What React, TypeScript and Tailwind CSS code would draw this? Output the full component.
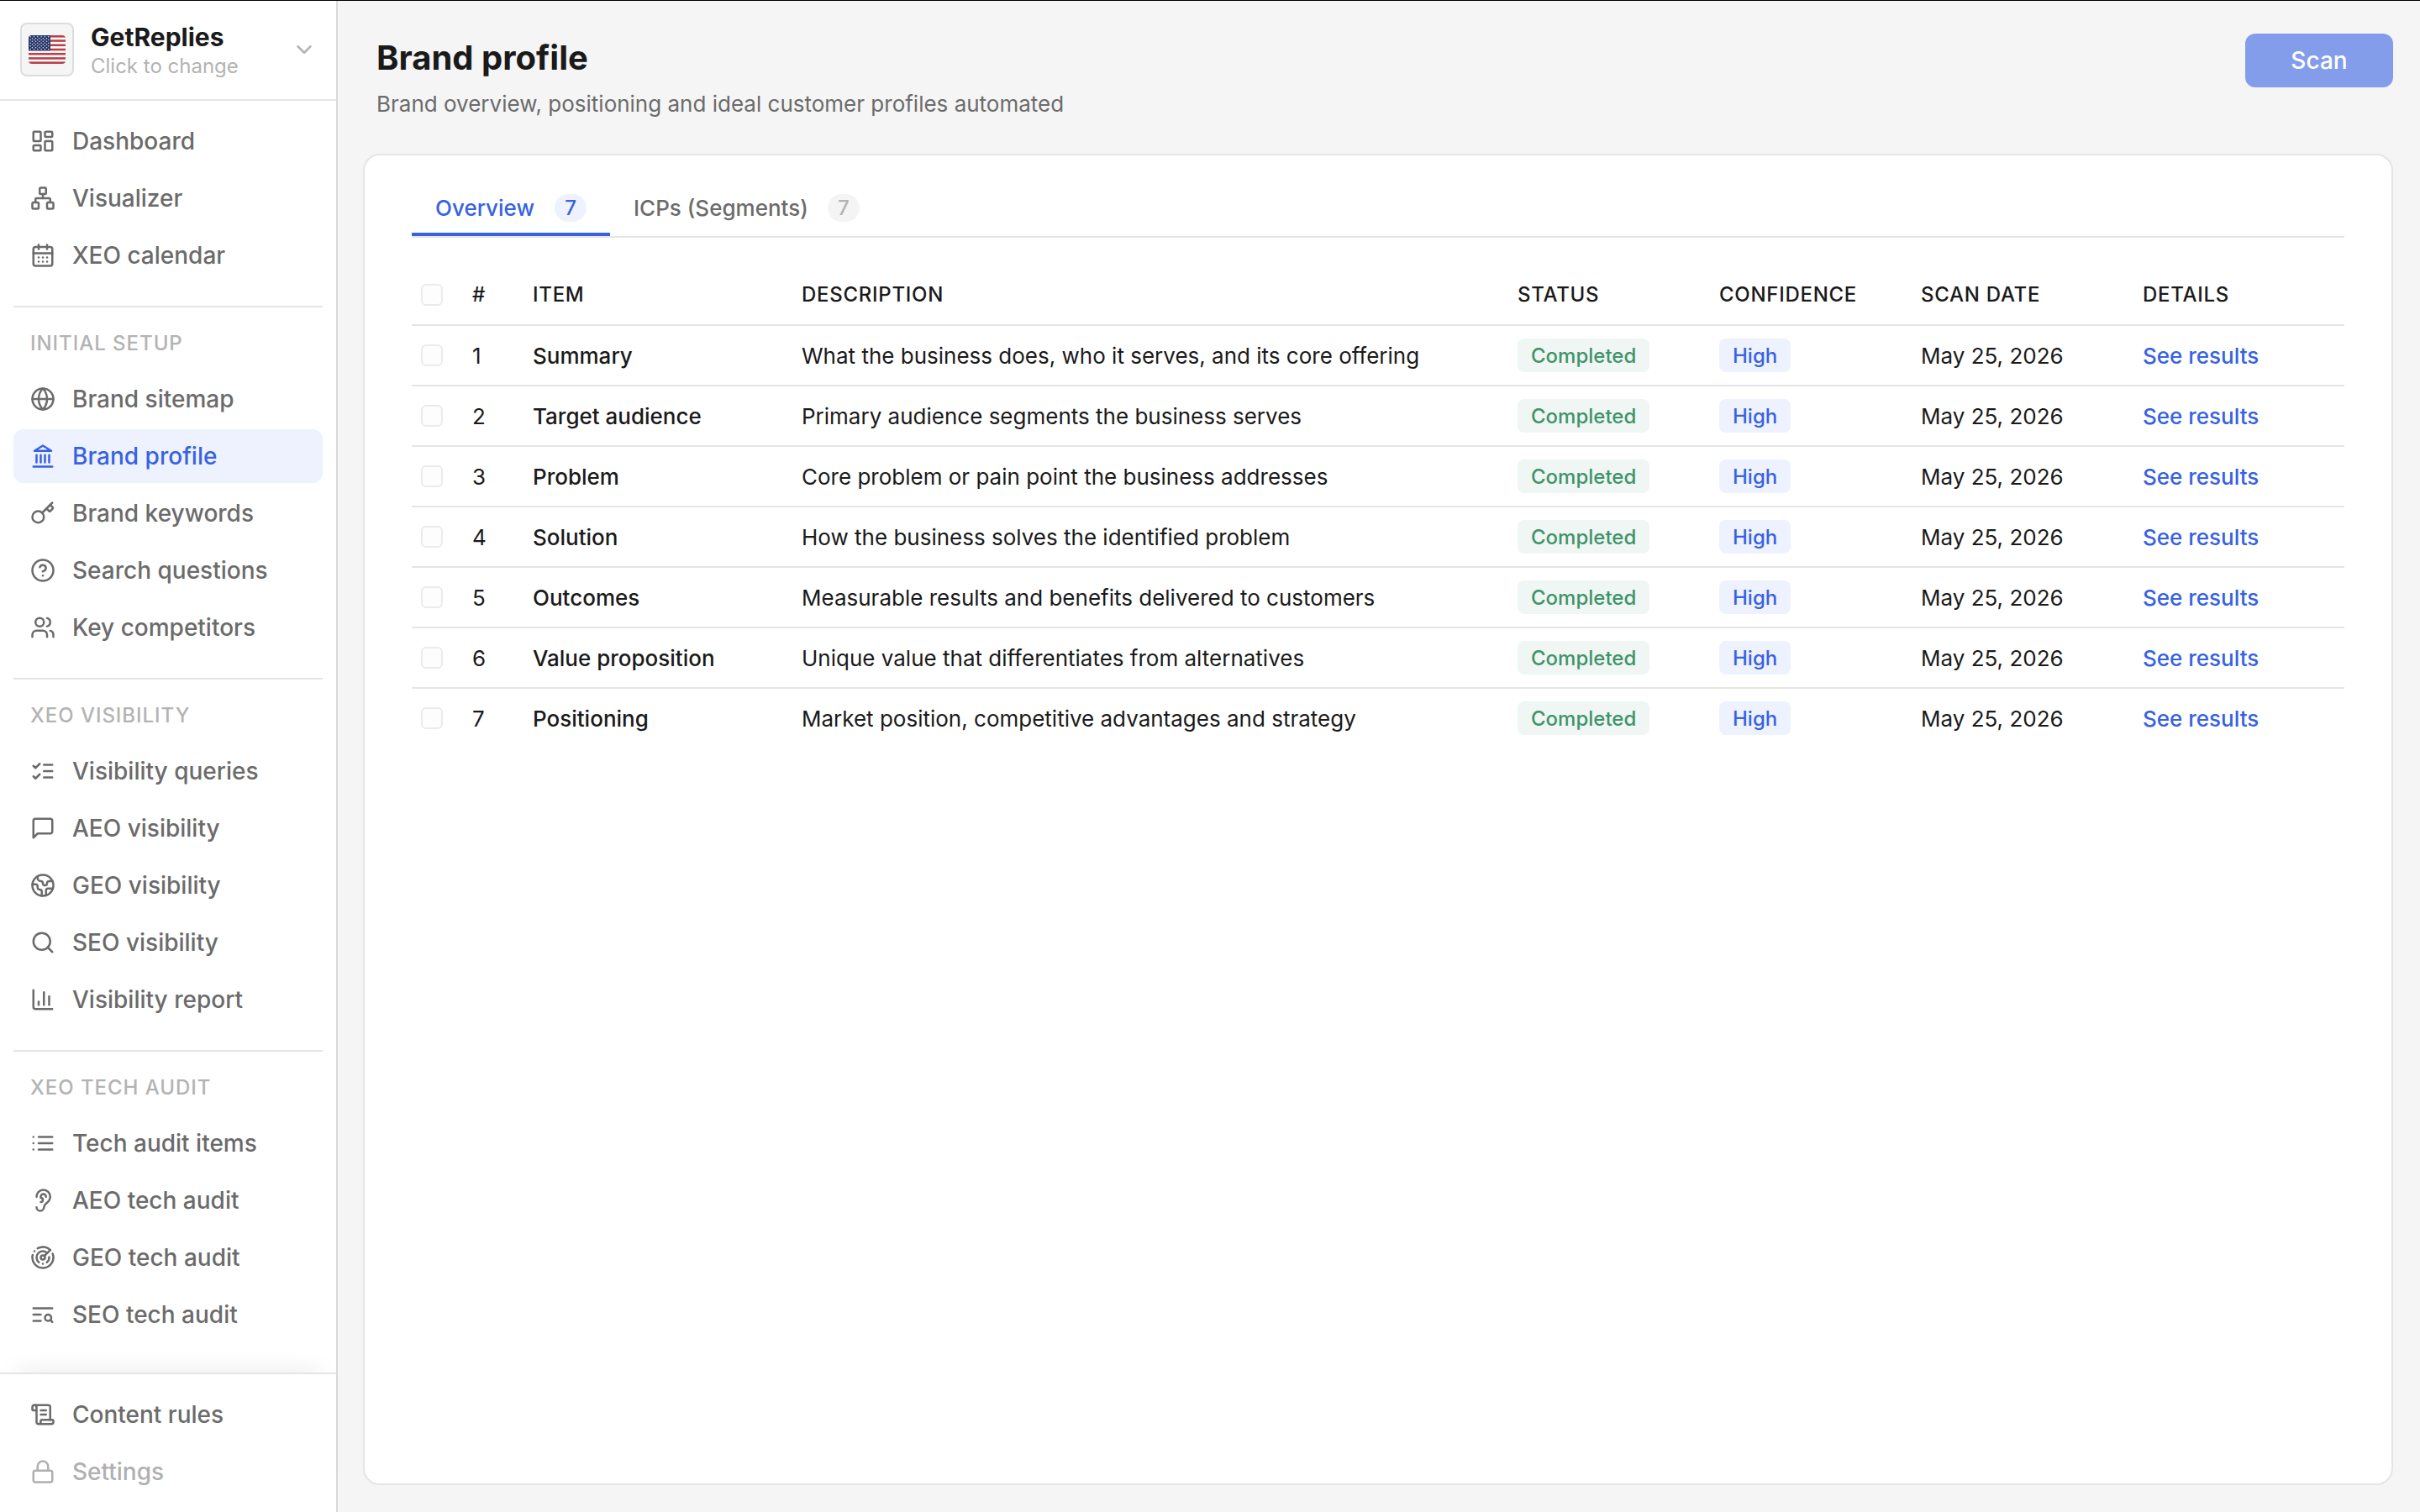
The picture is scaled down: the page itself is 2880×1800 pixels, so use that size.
import React from "react";
import { clsx } from "clsx";
import {
  CalendarDays,
  ChartColumn,
  ChevronDown,
  CircleQuestionMark,
  Ear,
  Earth,
  Globe,
  Key,
  LayoutDashboard,
  Lock,
  Network,
  Radar,
  ScrollText,
  Search,
  Users,
} from "lucide-react";

type IconProps = { className?: string; strokeWidth?: number };
type IconType = React.ComponentType<IconProps>;

// ── Local icons ───────────────────────────────────────────────────────────
const makeIcon = (children: React.ReactNode): IconType =>
  function Icon({ className, strokeWidth = 2 }) {
    return (
      <svg
        viewBox="0 0 24 24"
        fill="none"
        stroke="currentColor"
        strokeWidth={strokeWidth}
        strokeLinecap="round"
        strokeLinejoin="round"
        className={className}
      >
        {children}
      </svg>
    );
  };

const Landmark = makeIcon(
  <>
    <path d="M3 22h18M6 18v-7M10 18v-7M14 18v-7M18 18v-7" />
    <polygon points="12 2 20 7 4 7" />
  </>
);

const Message = makeIcon(
  <path d="M21 15a2 2 0 0 1-2 2H7l-4 4V5a2 2 0 0 1 2-2h14a2 2 0 0 1 2 2z" />
);

const Checks = makeIcon(<path d="m3 17 2 2 4-4M3 7l2 2 4-4M13 6h8M13 12h8M13 18h8" />);

const Bullets = makeIcon(
  <path d="M3 6h.01M3 12h.01M3 18h.01M8 6h13M8 12h13M8 18h13" />
);

const TextSearch = makeIcon(
  <>
    <path d="M21 6H3M10 12H3M10 18H3M21 19l-1.9-1.9" />
    <circle cx="17" cy="15" r="3" />
  </>
);

// ── Data ──────────────────────────────────────────────────────────────────
type NavEntry = { label: string; icon: IconType; active?: boolean; muted?: boolean };

const SECTIONS: { title?: string; items: NavEntry[] }[] = [
  {
    items: [
      { label: "Dashboard", icon: LayoutDashboard },
      { label: "Visualizer", icon: Network },
      { label: "XEO calendar", icon: CalendarDays },
    ],
  },
  {
    title: "INITIAL SETUP",
    items: [
      { label: "Brand sitemap", icon: Globe },
      { label: "Brand profile", icon: Landmark, active: true },
      { label: "Brand keywords", icon: Key },
      { label: "Search questions", icon: CircleQuestionMark },
      { label: "Key competitors", icon: Users },
    ],
  },
  {
    title: "XEO VISIBILITY",
    items: [
      { label: "Visibility queries", icon: Checks },
      { label: "AEO visibility", icon: Message },
      { label: "GEO visibility", icon: Earth },
      { label: "SEO visibility", icon: Search },
      { label: "Visibility report", icon: ChartColumn },
    ],
  },
  {
    title: "XEO TECH AUDIT",
    items: [
      { label: "Tech audit items", icon: Bullets },
      { label: "AEO tech audit", icon: Ear },
      { label: "GEO tech audit", icon: Radar },
      { label: "SEO tech audit", icon: TextSearch },
    ],
  },
];

const FOOTER: NavEntry[] = [
  { label: "Content rules", icon: ScrollText },
  { label: "Settings", icon: Lock, muted: true },
];

const ROWS = [
  ["Summary", "What the business does, who it serves, and its core offering"],
  ["Target audience", "Primary audience segments the business serves"],
  ["Problem", "Core problem or pain point the business addresses"],
  ["Solution", "How the business solves the identified problem"],
  ["Outcomes", "Measurable results and benefits delivered to customers"],
  ["Value proposition", "Unique value that differentiates from alternatives"],
  ["Positioning", "Market position, competitive advantages and strategy"],
];

const GRID = "grid grid-cols-[72px_72px_320px_852px_240px_240px_264px_240px] items-center";

// ── Pieces ────────────────────────────────────────────────────────────────
const Flag = () => (
  <svg viewBox="0 0 44 34" className="h-[34px] w-11">
    <defs>
      <clipPath id="flag">
        <rect width="44" height="34" rx="4" />
      </clipPath>
    </defs>
    <g clipPath="url(#flag)">
      <rect width="44" height="34" fill="#fff" />
      {[0, 2, 4, 6, 8, 10, 12].map((i) => (
        <rect key={i} y={(i * 34) / 13} width="44" height={34 / 13} fill="#b9414a" />
      ))}
      <rect width="26" height={(34 * 7) / 13} fill="#27376b" />
      {Array.from({ length: 9 }).map((_, r) =>
        Array.from({ length: r % 2 ? 5 : 6 }).map((_, c) => (
          <circle
            key={`${r}-${c}`}
            cx={2.2 + c * 4.3 + (r % 2 ? 2.15 : 0)}
            cy={1.8 + r * 1.84}
            r="0.75"
            fill="#dfe2ee"
          />
        ))
      )}
    </g>
  </svg>
);

const NavItem = ({ label, icon: Icon, active, muted }: NavEntry) => (
  <a
    className={clsx(
      "flex h-16 items-center gap-5 rounded-xl px-5 text-[28px] font-medium",
      active && "bg-[#eef2fe] text-[#3662e3]",
      muted && "text-[#b0b0b0]",
      !active && !muted && "text-[#6b6b6b]"
    )}
  >
    <Icon className="size-[30px] shrink-0" strokeWidth={2} />
    {label}
  </a>
);

const Sidebar = () => (
  <aside className="flex w-[402px] shrink-0 flex-col border-r-2 border-[#dadada] bg-white">
    <div className="flex h-[119px] items-center gap-5 border-b-2 border-[#e5e5e5] pr-[23px] pb-px pl-6">
      <div className="flex size-16 shrink-0 items-center justify-center rounded-lg border-2 border-[#dddddd] bg-[#f5f5f5]">
        <Flag />
      </div>
      <div className="flex-1 pt-1.5">
        <div className="text-[30px] leading-[34px] font-bold text-[#1a1a1a]">GetReplies</div>
        <div className="text-2xl leading-9 text-[#b3b3b3]">Click to change</div>
      </div>
      <ChevronDown className="size-[30px] text-[#b3b3b3]" strokeWidth={2} />
    </div>

    <nav className="flex-1 px-4 pt-4">
      {SECTIONS.map((section, i) => (
        <div key={i} className={clsx(i > 0 && "mt-7 border-t-2 border-[#e5e5e5]")}>
          {section.title && (
            <div className="flex h-[77px] items-center px-5 pt-2 text-2xl font-medium tracking-[0.04em] text-[#b3b3b3]">
              {section.title}
            </div>
          )}
          <div className="flex flex-col gap-1">
            {section.items.map((item) => (
              <NavItem key={item.label} {...item} />
            ))}
          </div>
        </div>
      ))}
    </nav>

    <div className="flex flex-col gap-1 border-t-2 border-[#e5e5e5] p-4 shadow-[0_-20px_28px_-20px_rgba(0,0,0,0.09)]">
      {FOOTER.map((item) => (
        <NavItem key={item.label} {...item} />
      ))}
    </div>
  </aside>
);

const Checkbox = () => (
  <span className="ml-[11px] size-[26px] rounded-md border-2 border-[#ebebeb] bg-[#fdfdfd]" />
);

const Tab = ({ label, count, active }: { label: string; count: number; active?: boolean }) => (
  <div
    className={clsx(
      "flex h-[68px] items-center border-b-4 px-7 pt-[5px] text-[26px] font-medium",
      active ? "gap-6 border-[#3662e3] text-[#3662e3]" : "gap-[23px] border-transparent text-[#6b6b6b]"
    )}
  >
    {label}
    <span
      className={clsx(
        "flex h-[33px] w-[38px] items-center justify-center rounded-full text-2xl",
        active ? "bg-[#eef2fe]" : "bg-[#f4f4f4] text-[#b3b3b3]"
      )}
    >
      {count}
    </span>
  </div>
);

const Table = () => (
  <div className="text-[26px] text-[#1a1a1a]">
    <div className={clsx(GRID, "h-[74px] border-b-2 border-[#e5e5e5] pt-0.5 text-2xl font-medium tracking-[0.03em]")}>
      <Checkbox />
      <span>#</span>
      <span>ITEM</span>
      <span>DESCRIPTION</span>
      <span>STATUS</span>
      <span>CONFIDENCE</span>
      <span>SCAN DATE</span>
      <span>DETAILS</span>
    </div>
    {ROWS.map(([item, description], i) => (
      <div key={item} className={clsx(GRID, "h-[72px] border-b-2 border-[#e5e5e5] last:border-transparent")}>
        <Checkbox />
        <span>{i + 1}</span>
        <span className="font-medium">{item}</span>
        <span>{description}</span>
        <span className="flex h-10 w-fit items-center rounded-lg bg-[#eff6f4] px-4 pt-0.5 text-2xl font-medium text-[#419369]">
          Completed
        </span>
        <span className="flex h-10 w-fit items-center rounded-lg bg-[#eef2fe] px-4 pt-0.5 text-2xl font-medium text-[#3662e3]">
          High
        </span>
        <span>May 25, 2026</span>
        <a className="font-medium text-[#3662e3]">See results</a>
      </div>
    ))}
  </div>
);

export default function App() {
  return (
    <div className="flex h-[1800px] w-[2880px] overflow-hidden border-t border-black bg-[#f5f5f5] font-['Inter',sans-serif] antialiased">
      <Sidebar />
      <main className="flex flex-1 flex-col pr-8 pb-8 pl-[30px]">
        <header className="flex h-[182px] items-start justify-between">
          <div className="pt-11 pl-4">
            <h1 className="text-[40px] leading-[48px] font-bold text-[#1a1a1a]">Brand profile</h1>
            <p className="mt-[13px] text-[26px] leading-9 text-[#6b6b6b]">
              Brand overview, positioning and ideal customer profiles automated
            </p>
          </div>
          <button className="mt-[39px] h-16 w-44 rounded-xl bg-[#849dea] text-[28px] font-medium text-white">
            Scan
          </button>
        </header>

        <section className="flex-1 rounded-[20px] border-2 border-[#e5e5e5] bg-white px-14 pt-7">
          <div className="flex border-b-2 border-[#e5e5e5]">
            <Tab label="Overview" count={7} active />
            <Tab label="ICPs (Segments)" count={7} />
          </div>
          <div className="pt-[31px]">
            <Table />
          </div>
        </section>
      </main>
    </div>
  );
}
